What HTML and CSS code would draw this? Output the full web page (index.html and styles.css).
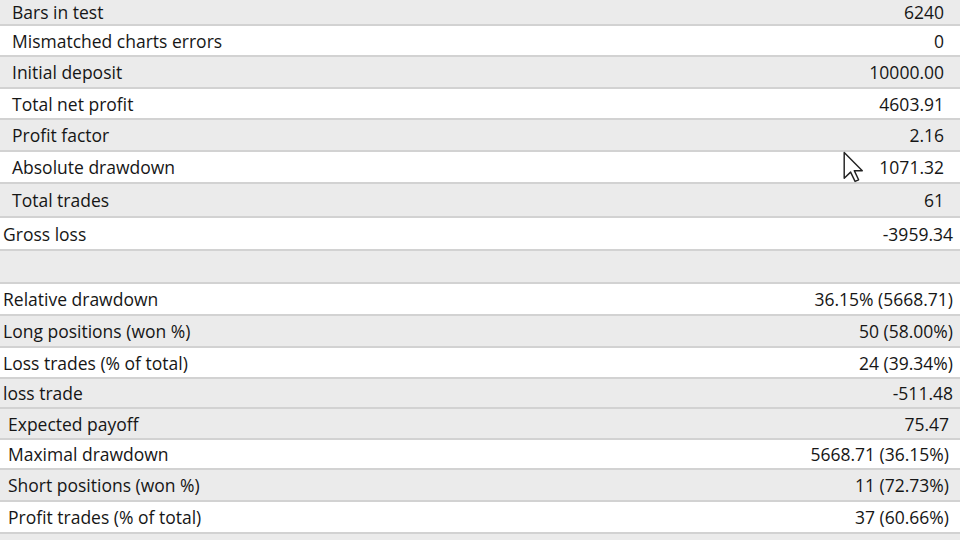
FILE: index.html
```html
<!DOCTYPE html>
<html>
<head>
<meta charset="utf-8">
<link rel="stylesheet" href="styles.css">
</head>
<body>
<div class="report">
  <div class="row gray first top"><span>Bars in test</span><span>6240</span></div>
  <div class="row h31 top"><span>Mismatched charts errors</span><span>0</span></div>
  <div class="row gray h32 top"><span>Initial deposit</span><span>10000.00</span></div>
  <div class="row h31 top"><span>Total net profit</span><span>4603.91</span></div>
  <div class="row gray h32 top"><span>Profit factor</span><span>2.16</span></div>
  <div class="row h32 top"><span>Absolute drawdown</span><span>1071.32</span></div>
  <div class="row gray h34 top"><span>Total trades</span><span>61</span></div>
  <div class="row h33 mid"><span>Gross loss</span><span>-3959.34</span></div>
  <div class="row gray h33 mid"><span></span><span></span></div>
  <div class="row h32 mid"><span>Relative drawdown</span><span>36.15% (5668.71)</span></div>
  <div class="row gray h32 mid"><span>Long positions (won %)</span><span>50 (58.00%)</span></div>
  <div class="row h31 mid"><span>Loss trades (% of total)</span><span>24 (39.34%)</span></div>
  <div class="row gray h30 mid"><span>loss trade</span><span>-511.48</span></div>
  <div class="row gray h31 low"><span>Expected payoff</span><span>75.47</span></div>
  <div class="row h30 low"><span>Maximal drawdown</span><span>5668.71 (36.15%)</span></div>
  <div class="row gray h32 low"><span>Short positions (won %)</span><span>11 (72.73%)</span></div>
  <div class="row h32 low"><span>Profit trades (% of total)</span><span>37 (60.66%)</span></div>
  <div class="tail"></div>
</div>
<svg class="cursor" width="22" height="32" viewBox="0 0 13 20">
  <path d="M1 1 L1 17 L5 13.2 L7.8 19 L10 18 L7.3 12.3 L12.3 12.3 Z" fill="#fff" stroke="#222" stroke-width="0.9" stroke-linejoin="round"/>
</svg>
</body>
</html>
```
FILE: styles.css
```css
html, body {
  margin: 0;
  padding: 0;
  background: #ffffff;
  overflow: hidden;
}
body {
  width: 960px;
  height: 540px;
  position: relative;
  font-family: "Open Sans", "Noto Sans", sans-serif;
  font-size: 17.5px;
  color: #161616;
}
.report {
  display: flex;
  flex-direction: column;
}
.row {
  display: flex;
  justify-content: space-between;
  align-items: center;
  box-sizing: border-box;
  border-bottom: 2px solid #d2d2d2;
  background: #ffffff;
  white-space: nowrap;
  line-height: 24px;
}
.row.gray { background: #ebebeb; }
.row.first {
  height: 26px;
  align-items: flex-start;
  line-height: 24px;
}
.h30 { height: 30px; }
.h31 { height: 31px; }
.h32 { height: 32px; }
.h33 { height: 33px; }
.h34 { height: 34px; }
.top { padding: 0 16px 0 12px; }
.mid { padding: 0 7px 0 3px; }
.low { padding: 0 11px 0 8px; }
.tail {
  height: 20px;
  background: #ebebeb;
}
.cursor {
  position: absolute;
  left: 842px;
  top: 151px;
}
```
